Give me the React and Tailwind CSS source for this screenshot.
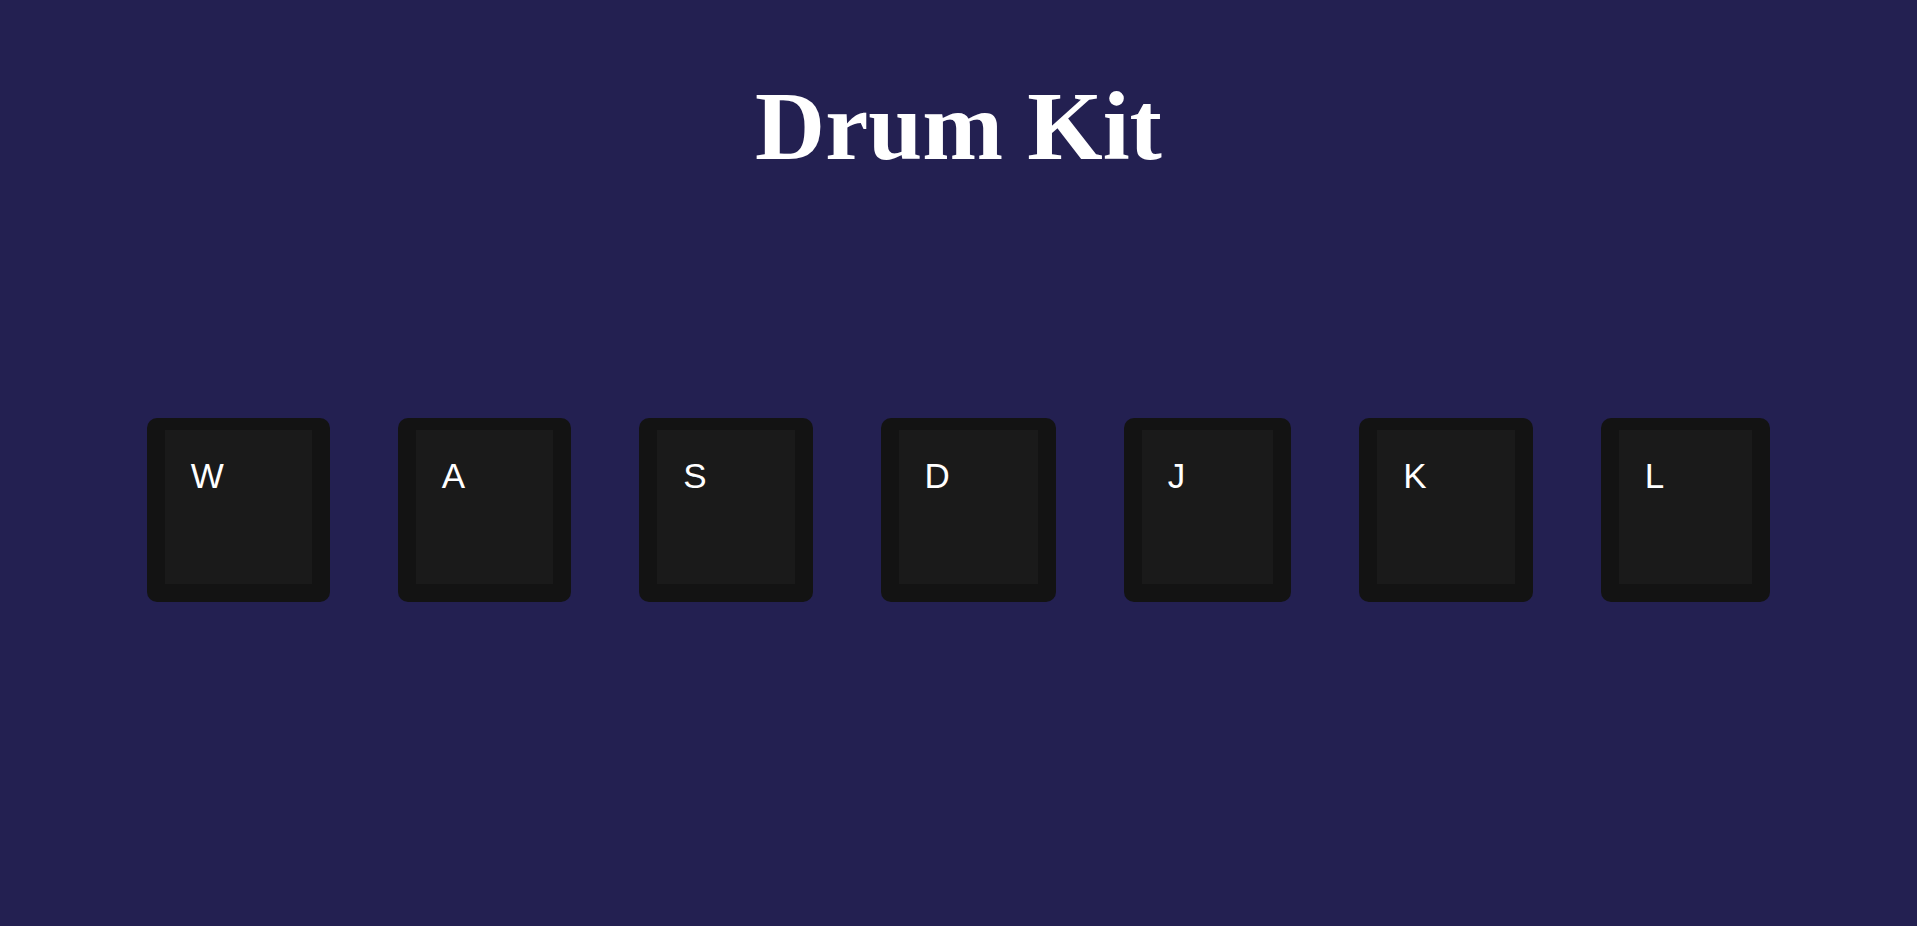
const keys = ['W', 'A', 'S', 'D', 'J', 'K', 'L']

function DrumKey({ letter }) {
  return (
    <button className="rounded-[10px] bg-[#131313] px-[18px] pt-3 pb-[18px] outline-none">
      <div className="bg-[#1a1a1a] pl-[26px] pt-[26px] pr-[88px] pb-[88px] text-left text-[35px] leading-[40px] text-white font-['Liberation_Sans',sans-serif]">
        {letter}
      </div>
    </button>
  )
}

export default function App() {
  return (
    <div className="h-screen overflow-hidden bg-[#232051] pt-[77px]">
      {/* Title */}
      <h1 className="text-center text-[97px] leading-[100px] font-bold text-white font-['Liberation_Serif',serif]">
        Drum Kit
      </h1>

      {/* Keys */}
      <div className="flex justify-center gap-[68px] mt-[241px]">
        {keys.map((k) => (
          <DrumKey key={k} letter={k} />
        ))}
      </div>
    </div>
  )
}
